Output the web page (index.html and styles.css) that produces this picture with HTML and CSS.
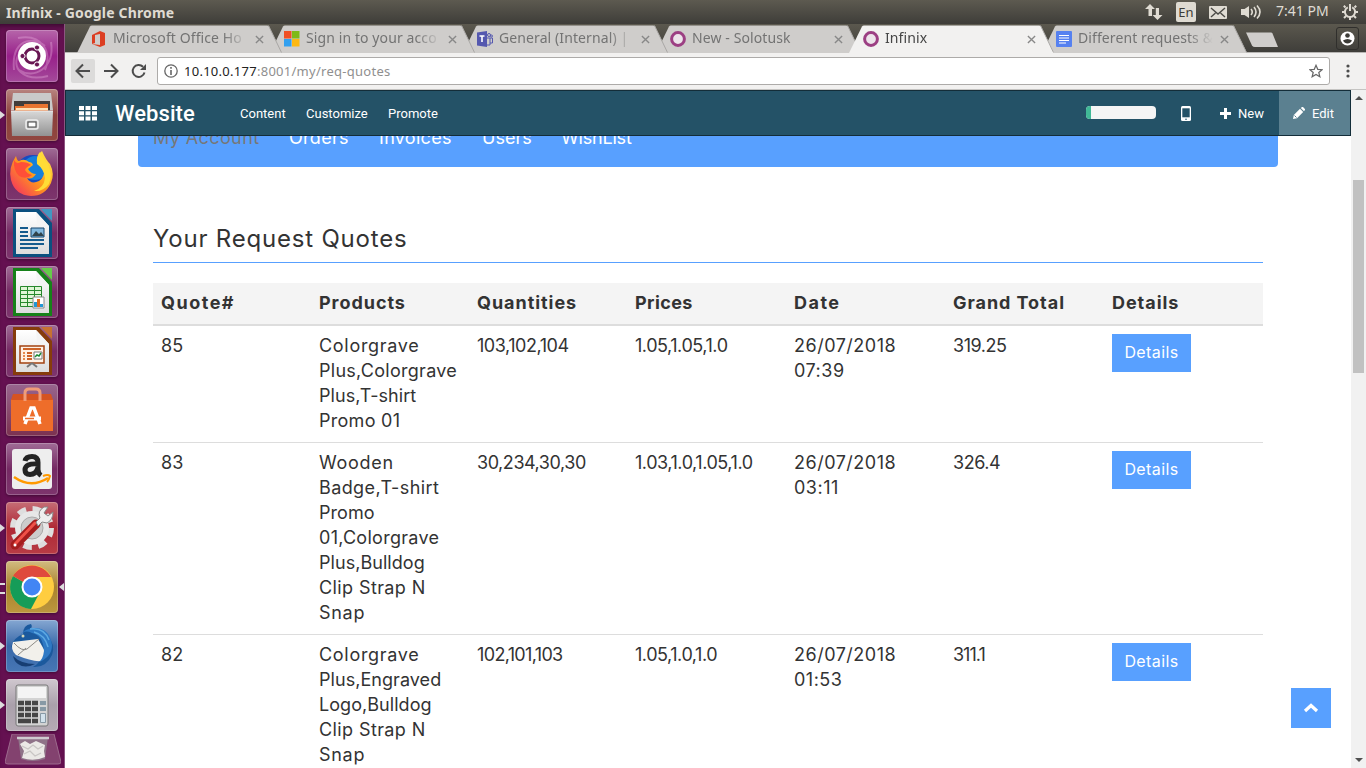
FILE: index.html
```html
<!DOCTYPE html>
<html lang="en">
<head>
<meta charset="utf-8">
<title>Infinix</title>
<link rel="stylesheet" href="styles.css">
</head>
<body>
<svg class="defs" width="0" height="0">
  <defs>
    <linearGradient id="paper" x1="0" y1="0" x2="0" y2="1"><stop offset="0" stop-color="#fff"/><stop offset="1" stop-color="#ddd"/></linearGradient>
    <linearGradient id="steel" x1="0" y1="0" x2="0" y2="1"><stop offset="0" stop-color="#d8d8d8"/><stop offset="1" stop-color="#929292"/></linearGradient>
    <linearGradient id="fox" x1="1" y1="0" x2="0" y2="1"><stop offset="0" stop-color="#fff44f"/><stop offset=".5" stop-color="#ff9a1b"/><stop offset="1" stop-color="#f4206b"/></linearGradient>
    <symbol id="close" viewBox="0 0 10 10"><path d="M1 1l8 8M9 1L1 9" stroke="currentColor" stroke-width="1.5" fill="none"/></symbol>
    <symbol id="ring" viewBox="0 0 16 16"><circle cx="8" cy="8" r="6.4" fill="#ece4ea" stroke="#9c3f83" stroke-width="3"/></symbol>
    <symbol id="tabshape" viewBox="0 0 205 28"><path d="M0 28L13 1.5Q13.500 .5 15 .5H190Q191.500 .5 192 1.500L205 28Z" fill="currentColor"/><path d="M191.500 .5L204.500 27.500" stroke="#a9a7a5" fill="none"/></symbol>
  </defs>
</svg>

<header class="panel">
  <span class="panel-title">Infinix - Google Chrome</span>
  <div class="indicators">
    <svg class="ind-net" width="18" height="16" viewBox="0 0 18 16"><path d="M5 0l5 5H7v7H3.500V5H0zM12.500 16l-5-5h3.300V4H14v7h3.500z" fill="#dfdbd2"/></svg>
    <span class="lang">En</span>
    <svg class="ind-mail" width="18" height="13" viewBox="0 0 18 13"><rect width="18" height="13" rx="1" fill="#dfdbd2"/><path d="M2 2l7 6 7-6M2 11l4.500-4M16 11l-4.500-4" stroke="#4a4944" stroke-width="1.400" fill="none"/></svg>
    <svg class="ind-sound" width="20" height="16" viewBox="0 0 20 16"><path d="M0 5h3.500L8 2v12L3.500 11H0z" fill="#dfdbd2"/><path d="M10 5q2.500 3 0 6M13 3q4 5 0 10M16 1.500q6 6.500 0 13" stroke="#dfdbd2" stroke-width="1.600" fill="none"/></svg>
    <span class="clock">7:41 PM</span>
    <svg class="ind-gear" width="16" height="16" viewBox="0 0 16 16" fill="none" stroke="#dfdbd2"><path d="M5.800 3.300A5.100 5.100 0 1 0 10.200 3.300" stroke-width="2"/><path d="M8 0v7" stroke-width="2"/><path d="M3.500 3.500L1.800 1.800M12.500 3.500l1.700-1.700M3 8H0M16 8h-3M4 12l-2 2M12 12l2 2M8 13v3" stroke-width="2"/></svg>
  </div>
</header>

<div class="desktop">
  <nav class="launcher">
    <div class="tile dash"><svg viewBox="0 0 52 52"><g fill="none" stroke="#efb7e3" stroke-opacity=".35" stroke-width="2"><path d="M8 40C5 10 26 5 39 16M12 8c24-5 35 15 27 32M45 12c4 26-17 38-32 28M42 46C18 52 3 38 14 22"/></g><circle cx="26" cy="26" r="14" fill="#fff"/><circle cx="26" cy="26" r="7" fill="none" stroke="#681653" stroke-width="3"/><g fill="#681653" stroke="#fff" stroke-width="1"><circle cx="16.500" cy="26" r="2.600"/><circle cx="31" cy="17.500" r="2.600"/><circle cx="31" cy="34.500" r="2.600"/></g></svg></div>
    <div class="tile files running"><svg viewBox="0 0 52 52"><path d="M7 4h38l2 17H5z" fill="#c9c9c9"/><path d="M8 12h36v11H8z" fill="#423d3a"/><path d="M9 17h9v-2h24v9H9z" fill="#e8742f"/><path d="M10 19h32v2H10z" fill="#ffe0b3"/><path d="M5 22h42l-1 25H6z" fill="url(#steel)"/><path d="M5 22h42" stroke="#eee"/><rect x="20" y="31" width="12" height="9" rx="2" fill="#bbb" stroke="#eee" stroke-width="1.500"/><rect x="22" y="33" width="8" height="5" fill="#fff" stroke="#444"/></svg></div>
    <div class="tile firefox"><svg viewBox="0 0 52 52"><circle cx="27" cy="25" r="18" fill="#174bc2"/><circle cx="29" cy="20" r="12" fill="#1580dc"/><path d="M10 8q1 5 3 5 5-3 10 1 3 0 4 3l-5 4q3 5 8 5-4 6-9 4 4 7 12 3 6-4 5-12-2-4-7-6 0-9 5-12 4 9 8 13 5 10 1 19Q39 48 25 48 9 47 5 32 2 20 10 8z" fill="url(#fox)"/><path d="M34 4q4 8 8 12 5 11 1 20-6 8-15 7 10-3 11-13-1-9-8-14-1-8 3-12z" fill="#ffdc36"/><path d="M8 12q2 5 7 2 7 0 10 3-5 2-6 5 2 4 7 5-6 5-13 1Q7 22 8 12z" fill="#ff4f38"/></svg></div>
    <div class="tile office"><svg viewBox="0 0 52 52"><path d="M7 2h26l13 14v34H7z" fill="#0b507f"/><path d="M35 2h11v12z" fill="#4297c1"/><path d="M10 5h20l13 14v28H10z" fill="url(#paper)"/><path d="M30 5l1 12 12 2z" fill="#f4f4f4"/><path d="M14 21h8M14 25h8M14 29h8M14 33h24M14 37h24M14 41h18" stroke="#155b8d" stroke-width="2"/><path d="M25 21h13v9H25z" fill="#82b9df" stroke="#16466c"/><path d="M26 29l4-5 3 3 2-2 3 4z" fill="#31444c"/></svg></div>
    <div class="tile office"><svg viewBox="0 0 52 52"><path d="M7 2h26l13 14v34H7z" fill="#168119"/><path d="M35 2h11v12z" fill="#65cb4a"/><path d="M10 5h20l13 14v28H10z" fill="url(#paper)"/><path d="M30 5l1 12 12 2z" fill="#f4f4f4"/><path d="M14.500 20.500h21v20h-21zM14 24.500h22M14 28.500h22M14 32.500h22M14 36.500h22M21.500 20v20M28.500 20v20" stroke="#27882c" fill="#dff5d5"/><path d="M27 31h11v11H27z" fill="#fff" stroke="#888"/><path d="M29.500 36v5M35.500 38v3" stroke="#2297d4" stroke-width="3"/><path d="M32.500 33v8" stroke="#e36b1c" stroke-width="3"/></svg></div>
    <div class="tile office"><svg viewBox="0 0 52 52"><path d="M7 2h26l13 14v34H7z" fill="#863c0b"/><path d="M35 2h11v12z" fill="#c67131"/><path d="M10 5h20l13 14v28H10z" fill="url(#paper)"/><path d="M30 5l1 12 12 2z" fill="#f4f4f4"/><path d="M14 21h24v17H14z" fill="#fff1e5" stroke="#a34110" stroke-width="1.500"/><path d="M17 24h18M21 28h5M21 31h5M21 34h5" stroke="#cd6328" stroke-width="2"/><path d="M17 28h2M17 31h2M17 34h2" stroke="#e58a4f" stroke-width="2"/><path d="M28 27h8v7h-8z" fill="#fff" stroke="#777"/><path d="M29 32l2-2 2 1 2-3" stroke="#1e8b35" fill="none" stroke-width="1.500"/><path d="M26 38l-5 4M26 38l5 4" stroke="#777" stroke-width="2"/></svg></div>
    <div class="tile software"><svg viewBox="0 0 52 52"><path d="M5 15h42v32H5z" fill="#ee6d2a"/><path d="M7 10h38l2 6H5z" fill="#d55322"/><path d="M19 17V9q0-4 4-4h7q4 0 4 4v8" fill="none" stroke="#ef9c79" stroke-width="3"/><path d="M19 40l6-16h3l6 16" fill="none" stroke="#fff" stroke-width="3.500"/><path d="M17 34.500h18" stroke="#fff" stroke-width="4"/><path d="M19 34.500h9" stroke="#ee6d2a" stroke-width="1.500"/></svg></div>
    <div class="tile amazon"><svg viewBox="0 0 52 52"><rect x="6" y="6" width="40" height="40" rx="3" fill="#eee"/><path d="M19 18q1-4.500 7-4.500 6 0 6 6v7q0 4 3 6M32 21q-13-1-13 6 0 4.500 5 4.500 6 0 8-7" stroke="#242424" stroke-width="5" fill="none"/><path d="M8 34q17 12 34 1" stroke="#f90" stroke-width="2.500" fill="none"/><path d="M37 33q5-2 7 0-1 4-3 6" stroke="#f90" stroke-width="2" fill="none"/></svg></div>
    <div class="tile settings running"><svg viewBox="0 0 52 52"><circle cx="26" cy="26" r="18" fill="none" stroke="#dedede" stroke-width="8" stroke-dasharray="8 6.137"/><circle cx="26" cy="26" r="17" fill="#e7e7e7"/><circle cx="26" cy="26" r="11" fill="#ccc" stroke="#aaa"/><path d="M9 43L30 22" stroke="#a51d1d" stroke-width="9" stroke-linecap="round"/><path d="M9 42L29 21" stroke="#ef5148" stroke-width="3" stroke-linecap="round"/><path d="M30 20l4-4q-3-7 4-11h4l-4 6 4 3 5-4q0 8-6 11l-5-1-4 4z" fill="#eee" stroke="#888"/><circle cx="9" cy="43" r="1.500" fill="#fff"/></svg></div>
    <div class="tile chrome running multi active"><svg viewBox="0 0 52 52"><circle cx="26" cy="26" r="22" fill="#ffcd40"/><path d="M26 26L7 15A22 22 0 0 0 25 48l9-17z" fill="#159c58"/><path d="M26 26L7 15A22 22 0 0 1 45 16H26z" fill="#df4a3d"/><circle cx="26" cy="26" r="10.500" fill="#fff"/><circle cx="26" cy="26" r="8.500" fill="#4285f4"/></svg></div>
    <div class="tile mail running"><svg viewBox="0 0 52 52"><path d="M5 27q2-9 12-13 0-9 8-10 2 3-1 5 9-3 17 6 9 10 5 20-6 13-19 12 7-4 6-8z" fill="#1b599d"/><path d="M7 22l25-3 8 14-5 8q-8 1-25-6-6-5-3-13z" fill="#f2f0eb"/><path d="M8 23q8 9 13 6l12-10M12 35l8-7" fill="none" stroke="#8d8b86"/><path d="M14 16q4-7 12-3 11 2 12 18-1 8-5 11 13-5 13-17Q44 9 30 8q-12 0-16 8z" fill="#2f79c4"/><path d="M24 9q14-2 19 11M28 12q11 3 14 15" stroke="#5ca8e2" stroke-width="1.500" fill="none"/><path d="M7 36q8 8 22 8-10 5-17 0-4-3-5-8z" fill="#173e73"/><circle cx="17" cy="16" r="1.500" fill="#d5d7ba"/></svg></div>
    <div class="tile calc running"><svg viewBox="0 0 52 52"><rect x="10" y="6" width="32" height="41" rx="2" fill="#d3d3d3" stroke="#777"/><rect x="12" y="8" width="28" height="11" fill="#f4f4f4"/><path d="M12 24h20M12 30h20M12 36h20" stroke="#454545" stroke-width="4.500" stroke-dasharray="6 1"/><path d="M12 42h13M26 42h6" stroke="#454545" stroke-width="4.500"/><path d="M34 24h6M34 30h6" stroke="#8799a5" stroke-width="4"/><path d="M34.500 34.500h5v9h-5z" fill="#d2e2ec" stroke="#8799a5"/></svg></div>
    <svg class="trash" width="56" height="34" viewBox="0 0 56 34"><path d="M7 0h42l7 28q0 2-3 2H3q-3 0-3-2z" fill="#83426f" stroke="#9d6b8e"/><path d="M13 3h30l-3 22q-12 4-24 0z" fill="#8f7388"/><path d="M15 10l5-3 5 3 6-3 9 4-1 6 1 6q-11 5-23 1l2-7z" fill="#ebe9e6"/><path d="M17 12l6 3 5-4 5 4 5-3M19 20l6-3 5 5 6-3" fill="none" stroke="#c9c6c4" stroke-width="1.300"/><path d="M12 4h32" stroke="#d0cad0" stroke-width="2.500"/></svg>
  </nav>

  <div class="browser">
    <div class="tabstrip">
      <div class="tab"><svg class="shape"><use href="#tabshape"/></svg><svg class="favicon" viewBox="0 0 16 16"><path d="M1 4l8-4 5 2v12l-5 2-8-3 8 1V3L4 4v8l-3 1z" fill="#dc3e22"/></svg><span class="tab-name">Microsoft Office Ho</span><svg class="x"><use href="#close"/></svg></div>
      <div class="tab"><svg class="shape"><use href="#tabshape"/></svg><svg class="favicon" viewBox="0 0 16 16"><path d="M0 0h7.500v7.500H0z" fill="#f05125"/><path d="M8 0h7.500v7.500H8z" fill="#7eba18"/><path d="M0 8h7.500v7.500H0z" fill="#32a0ef"/><path d="M8 8h7.500v7.500H8z" fill="#fdb813"/></svg><span class="tab-name">Sign in to your acco</span><svg class="x"><use href="#close"/></svg></div>
      <div class="tab"><svg class="shape"><use href="#tabshape"/></svg><svg class="favicon" viewBox="0 0 16 16"><path d="M0 1.500L10 0v16L0 14.500z" fill="#5558af"/><path d="M2.500 5h5M5 5v6" stroke="#fff" stroke-width="1.600"/><circle cx="12" cy="4" r="1.500" fill="none" stroke="#5558af"/><circle cx="14.500" cy="5" r="1" fill="none" stroke="#5558af"/><path d="M10 7h5.500v5H13v2h-3M13 7v5" fill="none" stroke="#5558af"/></svg><span class="tab-name">General (Internal) |</span><svg class="x"><use href="#close"/></svg></div>
      <div class="tab"><svg class="shape"><use href="#tabshape"/></svg><svg class="favicon"><use href="#ring"/></svg><span class="tab-name">New - Solotusk</span><svg class="x"><use href="#close"/></svg></div>
      <div class="tab current"><svg class="shape"><use href="#tabshape"/></svg><svg class="favicon"><use href="#ring"/></svg><span class="tab-name">Infinix</span><svg class="x"><use href="#close"/></svg></div>
      <div class="tab"><svg class="shape"><use href="#tabshape"/></svg><svg class="favicon" viewBox="0 0 16 16"><rect width="16" height="16" rx="1" fill="#5681f0"/><path d="M3 4.500h10M3 7h10M3 9.500h10M3 12h7" stroke="#fff" stroke-width="1.200"/></svg><span class="tab-name">Different requests &amp;</span><svg class="x"><use href="#close"/></svg></div>
      <svg class="newtab" width="34" height="16" viewBox="0 0 34 16"><path d="M1 .5h25q1 0 1.500 1L33 15H10q-2 0-3-1.500z" fill="#cfcdcb"/></svg>
      <div class="profile"><svg width="15" height="15" viewBox="0 0 15 15"><circle cx="7.500" cy="7.500" r="7" fill="#fff"/><circle cx="7.500" cy="4.500" r="2.300" fill="#3c3b37"/><path d="M3 9.500Q7.500 6.500 12 9.500 10.500 12.500 7.500 12.500T3 9.500z" fill="#3c3b37"/></svg></div>
    </div>
    <div class="toolbar">
      <span class="tool pressed"><svg width="16" height="16" viewBox="0 0 16 16"><path d="M15 8H2M8 1.500L1.500 8 8 14.500" /></svg></span>
      <span class="tool"><svg width="16" height="16" viewBox="0 0 16 16"><path d="M1 8h13M8 1.500L14.500 8 8 14.500"/></svg></span>
      <span class="tool reload"><svg width="16" height="16" viewBox="0 0 16 16"><path d="M13.500 9.500A6 6 0 1 1 12 3.800"/><path d="M15 1v6H9z" fill="#4c4c4c" stroke="none"/></svg></span>
      <div class="address">
        <svg width="14" height="14" viewBox="0 0 14 14"><circle cx="7" cy="7" r="6.200" fill="none" stroke="#666" stroke-width="1.300"/><path d="M7 6v5M7 3v1.700" stroke="#666" stroke-width="1.600"/></svg>
        <span class="url"><b>10.10.0.177</b>:8001/my/req-quotes</span>
        <svg class="star" width="14" height="14" viewBox="0 0 16 16"><path d="M8 1.500l2 4.600 5 .4-3.800 3.200 1.200 4.900L8 12l-4.400 2.600 1.200-4.900L1 6.500l5-.4z" fill="none" stroke="#666" stroke-width="1.400"/></svg>
      </div>
      <svg class="dots" width="4" height="14" viewBox="0 0 4 14"><g fill="#4c4c4c"><circle cx="2" cy="2" r="1.600"/><circle cx="2" cy="7" r="1.600"/><circle cx="2" cy="12" r="1.600"/></g></svg>
    </div>

    <div class="viewport">
      <div class="page">
        <div class="webbar">
          <svg class="apps" width="18" height="15" viewBox="0 0 18 15"><path d="M0 2h18M0 7.300h18M0 12.600h18" stroke="#fff" stroke-width="4" stroke-dasharray="5 1.500"/></svg>
          <span class="brand">Website</span>
          <span class="m1">Content</span><span class="m2">Customize</span><span class="m3">Promote</span>
          <span class="progress"><i></i></span>
          <svg class="phone" width="10" height="15" viewBox="0 0 10 15"><rect width="10" height="15" rx="1.500" fill="#fff"/><path d="M1.300 2.300h7.400v9H1.300z" fill="#245267"/><circle cx="5" cy="13.200" r=".8" fill="#245267"/></svg>
          <svg class="plus" width="11" height="11" viewBox="0 0 11 11"><path d="M5.500 0v11M0 5.500h11" stroke="#fff" stroke-width="3"/></svg>
          <span class="new">New</span>
          <span class="edit"><svg width="12" height="12" viewBox="0 0 12 12"><path d="M0 12l.8-4L7 1.800l3.200 3.200L4 11.200zM7.800 1L9 0q.6-.3 1 .1L11.900 2q.4.400 0 1L11 4.200z" fill="#fff"/><path d="M1.500 8.500l2 2" stroke="#5b8090"/></svg>Edit</span>
        </div>
        <div class="container">
          <div class="menu"><span class="here">My Account</span><span class="orders">Orders</span><span class="invoices">Invoices</span><span class="users">Users</span><span class="wish">WishList</span></div>
          <h3>Your Request Quotes</h3>
          <table>
            <colgroup><col class="narrow"><col class="narrow"><col class="narrow"><col><col><col><col></colgroup>
            <thead><tr><th class="airy">Quote#</th><th>Products</th><th>Quantities</th><th class="snug">Prices</th><th class="airy">Date</th><th>Grand Total</th><th>Details</th></tr></thead>
            <tbody>
              <tr><td>85</td><td><span class="w3">Colorgrave</span><br><span class="w1">Plus,Colorgrave</span><br>Plus,T-shirt<br><span class="w1">Promo 01</span></td><td class="num">103,102,104</td><td class="num">1.05,1.05,1.0</td><td class="date">26/07/2018<br>07:39</td><td class="num">319.25</td><td><a class="btn">Details</a></td></tr>
              <tr><td>83</td><td><span class="w3">Wooden</span><br><span class="w2">Badge,T-shirt</span><br>Promo<br><span class="w1">01,Colorgrave</span><br>Plus,Bulldog<br><span class="w2">Clip Strap N</span><br><span class="w3">Snap</span></td><td class="num">30,234,30,30</td><td class="num">1.03,1.0,1.05,1.0</td><td class="date">26/07/2018<br>03:11</td><td class="num">326.4</td><td><a class="btn">Details</a></td></tr>
              <tr><td>82</td><td><span class="w3">Colorgrave</span><br>Plus,Engraved<br>Logo,Bulldog<br><span class="w2">Clip Strap N</span><br><span class="w3">Snap</span></td><td class="num tight">102,101,103</td><td class="num">1.05,1.0,1.0</td><td class="date">26/07/2018<br>01:53</td><td class="num tighter">311.1</td><td><a class="btn">Details</a></td></tr>
            </tbody>
          </table>
        </div>
        <a class="totop"><svg width="16" height="10" viewBox="0 0 16 10"><path d="M2 8l6-5.500L14 8" fill="none" stroke="#fff" stroke-width="3.200"/></svg></a>
      </div>
      <div class="scrollbar"><svg width="8" height="4"><path d="M0 4l4-4 4 4z" fill="#505050"/></svg><div class="thumb"></div><svg width="8" height="4"><path d="M0 0h8L4 4z" fill="#505050"/></svg></div>
    </div>
  </div>
</div>
</body>
</html>
```
FILE: styles.css
```css
* { box-sizing: border-box; }
body { margin: 0; width: 1366px; height: 768px; overflow: hidden; font-family: "Noto Sans", "Open Sans", sans-serif; background: #fff; display: flex; flex-direction: column; }
svg { display: block; flex: none; }
.defs { position: absolute; }

.panel { height: 24px; flex: none; background: linear-gradient(#5d5a50, #3e3d39); display: flex; align-items: center; justify-content: space-between; padding: 0 8px 0 6px; color: #dfdbd2; }
.panel-title { font-weight: 700; font-size: 14px; letter-spacing: .15px; }
.indicators { display: flex; align-items: center; }
.lang { margin-left: 13px; width: 20px; height: 20px; border-radius: 2px; background: #dfdbd2; color: #3c3b37; font-size: 13px; line-height: 20px; text-align: center; }
.ind-mail { margin-left: 13px; }
.ind-sound { margin-left: 14px; }
.clock { margin-left: 15px; width: 53px; font-size: 14px; line-height: 22px; margin-bottom: 2px; white-space: nowrap; }
.ind-gear { margin-left: 13px; }

.desktop { display: flex; height: 744px; }
.launcher { width: 65px; flex: none; background: #651151; border-right: 1px solid #8d5481; padding: 6px 0 0 6px; display: flex; flex-direction: column; gap: 7px; box-shadow: inset 0 5px 5px -3px #3a0930; }
.tile { width: 52px; height: 52px; flex: none; border-radius: 4px; position: relative; background: linear-gradient(#a06c96, #752963 50%, #7d356d); box-shadow: inset 0 0 0 1px rgba(255, 255, 255, .22), 0 1px 3px #420a35; }
.tile svg { width: 52px; height: 52px; }
.dash { background: linear-gradient(#b666aa, #98208a 50%, #a44a9a); }
.files { background: linear-gradient(#b88480, #8b3f3b 50%, #914740); }
.software { background: linear-gradient(#98658e, #7b3150); }
.settings { background: linear-gradient(#c56d76, #af2835 50%, #b83c45); }
.chrome { background: linear-gradient(#d2bb80, #a9822e 50%, #bc973e); }
.mail { background: linear-gradient(#85a7d2, #3968a8 50%, #4777b5); }
.calc { background: linear-gradient(#d0c8cf, #aaa0ab 50%, #b5abb4); }
.running::before { content: ""; position: absolute; left: -6px; top: 22px; border: 4px solid transparent; border-left: 5px solid #ddd; border-right: 0; }
.multi::before { top: 22px; width: 5px; height: 7px; border: solid #ddd; border-width: 2px 0; }
.active::after { content: ""; position: absolute; right: -6px; top: 22px; border: 4px solid transparent; border-right: 5px solid #ddd; border-left: 0; }
.trash { margin: -4px 0 0 -1px; }

.browser { flex: 1; min-width: 0; display: flex; flex-direction: column; }
.tabstrip { height: 29px; flex: none; background: linear-gradient(#5b584e, #3f3e3a); padding: 1px 0 0 12px; display: flex; border-bottom: 1px solid #b7b5b3; }
.tab { width: 205px; height: 28px; margin-right: -12px; flex: none; position: relative; display: flex; align-items: center; color: #737373; }
.tab:nth-child(1) { z-index: 6; }
.tab:nth-child(2) { z-index: 5; }
.tab:nth-child(3) { z-index: 4; }
.tab:nth-child(4) { z-index: 3; }
.tab.current { z-index: 8; color: #454545; }
.shape { position: absolute; inset: 0; width: 205px; height: 28px; color: #cfcdcb; }
.current .shape { color: #f2f1f0; }
.favicon { width: 16px; height: 16px; margin-left: 14px; position: relative; }
.tab-name { position: relative; margin-left: 6px; width: 136px; font-size: 14px; line-height: 20px; margin-bottom: 2px; letter-spacing: .1px; white-space: nowrap; -webkit-mask-image: linear-gradient(90deg, #000 110px, transparent 135px); mask-image: linear-gradient(90deg, #000 110px, transparent 135px); }
.x { width: 9px; height: 9px; margin-left: 6px; position: relative; color: #888; }
.newtab { margin: 7px 0 0 10px; }
.profile { margin: 2px 7px 0 auto; width: 23px; height: 23px; border: 1px solid #302f2c; border-radius: 3px; display: grid; place-items: center; }

.toolbar { height: 37px; flex: none; background: #f2f1f0; border-bottom: 1px solid #c5c4c2; display: flex; align-items: center; padding: 0 16px 0 6px; }
.tool { width: 24px; height: 24px; margin-right: 4px; display: grid; place-items: center; border-radius: 2px; }
.tool svg { fill: none; stroke: #4c4c4c; stroke-width: 2; }
.pressed { background: #dcdbda; }
.reload { margin-right: 6px; }
.address { flex: 1; height: 28px; border: 1px solid #adaba9; border-radius: 3px; background: #fff; display: flex; align-items: center; padding: 0 6px; }
.url { margin-left: 6px; font-size: 13px; color: #8f8f8f; letter-spacing: .27px; }
.url b { font-weight: 400; color: #222; }
.star { margin-left: auto; }
.dots { margin-left: 16px; }

.viewport { flex: 1; min-height: 0; display: flex; }
.page { width: 1286px; position: relative; overflow: hidden; display: flex; flex-direction: column; }
.webbar { height: 46px; flex: none; background: #245267; border: 1px solid #132d39; display: flex; align-items: center; padding-left: 13px; color: #fff; font: 13px Roboto, sans-serif; position: relative; z-index: 2; }
.brand { margin-left: 18px; width: 80px; font-size: 22px; font-weight: 500; letter-spacing: .1px; }
.m1 { margin-left: 45px; width: 46px; }
.m2 { margin-left: 20px; width: 62px; }
.m3 { margin-left: 20px; width: 51px; }
.progress { margin-left: 647px; width: 70px; height: 13px; border-radius: 4px; background: #f5f5f5; overflow: hidden; margin-bottom: 2px; }
.progress i { display: block; width: 5px; height: 13px; background: #40b896; }
.phone { margin-left: 25px; }
.plus { margin-left: 29px; }
.new { margin-left: 7px; }
.edit { margin-left: auto; width: 71px; height: 44px; background: #5b8090; display: flex; align-items: center; gap: 7px; padding-left: 14px; }

.container { width: 1140px; margin-left: 73px; font-family: Inter, sans-serif; color: #333; }
.menu { height: 68px; margin-top: -37px; background: #58a0ff; border-radius: 4px; padding: 26px 15px 0; display: flex; color: #fff; font-size: 18px; line-height: 25px; white-space: nowrap; }
.here { width: 136px; color: #777; letter-spacing: .4px; }
.orders { width: 90px; letter-spacing: .3px; }
.invoices { width: 103px; letter-spacing: .3px; }
.users { width: 79px; }
.wish { letter-spacing: -.2px; }
h3 { margin: 55px 15px 20px; height: 41px; border-bottom: 1px solid #58a0ff; font-size: 24px; line-height: 34px; font-weight: 400; letter-spacing: .8px; }
table { margin: 0 15px; width: 1110px; table-layout: fixed; border-collapse: collapse; font-size: 18px; line-height: 25px; }
col { width: 159px; }
.narrow { width: 158px; }
th { height: 42px; padding: 7px 8px 8px; text-align: left; vertical-align: top; background: #f4f4f4; border-bottom: 2px solid #ddd; white-space: nowrap; font-weight: 700; letter-spacing: .95px; }
.airy { letter-spacing: 1.5px; }
.snug { letter-spacing: .4px; }
td { padding: 7px 8px 9px; vertical-align: top; white-space: nowrap; border-top: 1px solid #ddd; letter-spacing: .05px; }
.w1 { letter-spacing: .28px; }
.w2 { letter-spacing: .4px; }
.w3 { letter-spacing: .7px; }
.num { letter-spacing: -.45px; }
.tight { letter-spacing: -.65px; }
.tighter { letter-spacing: -1px; }
.date { letter-spacing: .5px; }
.btn { display: block; margin-top: 1px; width: 79px; height: 38px; background: #58a0ff; color: #fff; font-size: 16px; line-height: 37px; text-align: center; letter-spacing: .4px; }
.totop { position: absolute; right: 20px; bottom: 40px; width: 40px; height: 40px; background: #58a0ff; display: grid; place-items: center; }
.scrollbar { width: 15px; background: #f1f1f1; display: flex; flex-direction: column; align-items: center; padding: 6px 0; }
.thumb { width: 11px; height: 193px; margin: 80px 0 auto; background: #c1c1c1; }
```
